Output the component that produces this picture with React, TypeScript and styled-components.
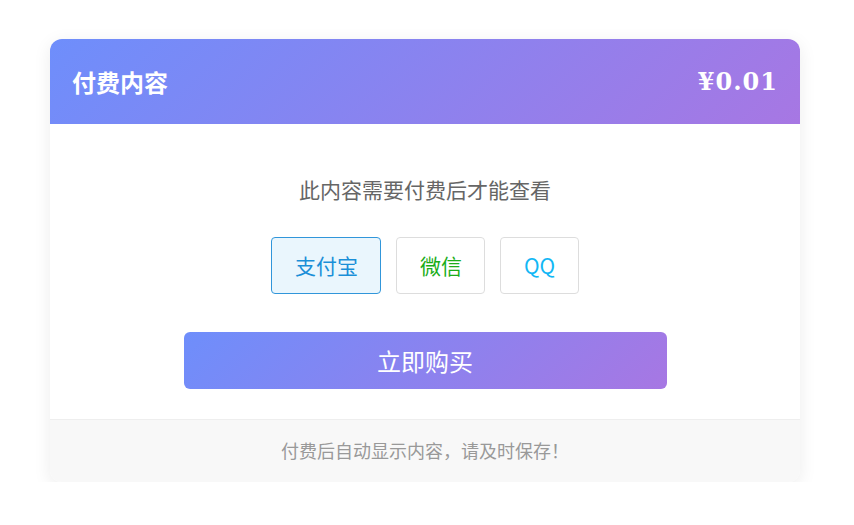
import React, { useState } from "react";
import styled, { createGlobalStyle } from "styled-components";

const GlobalStyle = createGlobalStyle`
  html, body { margin: 0; padding: 0; background: #ffffff; }
  body { font-family: "Noto Sans CJK SC", "Noto Sans", sans-serif; }
  * { box-sizing: border-box; }
`;

const Page = styled.div`
  padding: 39px 0 0 50px;
`;

const Card = styled.div`
  width: 750px;
  border-radius: 12px;
  overflow: hidden;
  background: #ffffff;
  box-shadow: 0 4px 18px rgba(0, 0, 0, 0.08);
`;

const Header = styled.div`
  height: 85px;
  display: flex;
  align-items: center;
  justify-content: space-between;
  padding: 0 22px 0 22px;
  background: linear-gradient(135deg, #6e8efb 0%, #a777e3 100%);
  color: #ffffff;
`;

const Title = styled.div`
  font-size: 24px;
  font-weight: 700;
  line-height: 30px;
`;

const Price = styled.div`
  font-family: "DejaVu Serif", "Liberation Serif", serif;
  font-size: 24px;
  font-weight: 700;
  letter-spacing: 1px;
  line-height: 30px;
`;

const Body = styled.div`
  padding: 50px 0 30px;
  display: flex;
  flex-direction: column;
  align-items: center;
`;

const Prompt = styled.div`
  font-size: 21px;
  line-height: 30px;
  color: #666666;
`;

const Methods = styled.div`
  display: flex;
  gap: 15px;
  margin-top: 33px;
`;

const Method = styled.button<{ $color: string; $active?: boolean }>`
  font-family: "Noto Sans CJK SC", "Noto Sans", sans-serif;
  font-size: 21px;
  line-height: 25px;
  padding: 15px 22.5px;
  border-radius: 4px;
  cursor: pointer;
  color: ${(p) => p.$color};
  border: 1px solid ${(p) => (p.$active ? "#3196da" : "#dddddd")};
  background: ${(p) => (p.$active ? "#eaf6fd" : "#ffffff")};
`;

const BuyButton = styled.button`
  margin-top: 38px;
  width: 483px;
  height: 57px;
  border: none;
  border-radius: 6px;
  background: linear-gradient(135deg, #6e8efb 0%, #a777e3 100%);
  color: #ffffff;
  font-family: "Noto Sans CJK SC", "Noto Sans", sans-serif;
  font-size: 24px;
  cursor: pointer;
`;

const Footer = styled.div`
  height: 63px;
  display: flex;
  align-items: center;
  justify-content: center;
  padding-bottom: 2px;
  background: #f8f8f8;
  border-top: 1px solid #eeeeee;
  font-size: 18px;
  color: #999999;
`;

const methods = [
  { key: "alipay", label: "支付宝", color: "#1a8fd8" },
  { key: "wechat", label: "微信", color: "#1aad19" },
  { key: "qq", label: "QQ", color: "#12b7f5" },
];

export default function App() {
  const [selected, setSelected] = useState("alipay");
  return (
    <Page>
      <GlobalStyle />
      <Card>
        <Header>
          <Title>付费内容</Title>
          <Price>¥0.01</Price>
        </Header>
        <Body>
          <Prompt>此内容需要付费后才能查看</Prompt>
          <Methods>
            {methods.map((m) => (
              <Method
                key={m.key}
                $color={m.color}
                $active={selected === m.key}
                onClick={() => setSelected(m.key)}
              >
                {m.label}
              </Method>
            ))}
          </Methods>
          <BuyButton>立即购买</BuyButton>
        </Body>
        <Footer>付费后自动显示内容，请及时保存！</Footer>
      </Card>
    </Page>
  );
}
